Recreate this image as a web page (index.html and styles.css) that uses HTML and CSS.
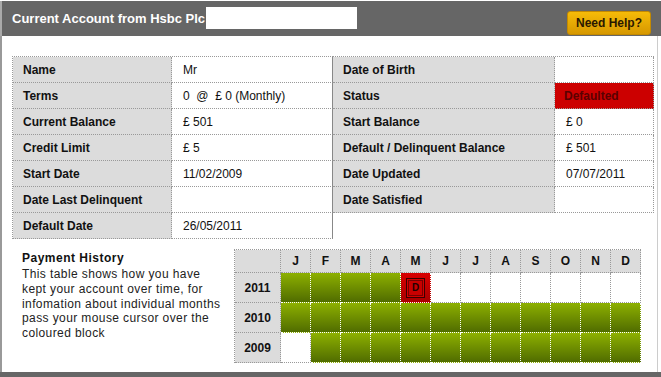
FILE: index.html
```html
<!DOCTYPE html>
<html>
<head>
<meta charset="utf-8">
<link rel="stylesheet" href="styles.css">
</head>
<body>
<div class="page">
  <div class="header">
    <h1 class="title">Current Account from Hsbc Plc<span class="redact"></span></h1>
    <a class="help">Need Help?</a>
  </div>
  <div class="content">
    <div class="details">
      <table class="tbl tbl-left">
        <colgroup><col class="c-l1"><col class="c-v1"></colgroup>
        <tr><td class="lab">Name</td><td class="val">Mr</td></tr>
        <tr><td class="lab">Terms</td><td class="val">0&nbsp; @&nbsp; £ 0 (Monthly)</td></tr>
        <tr><td class="lab">Current Balance</td><td class="val">£ 501</td></tr>
        <tr><td class="lab">Credit Limit</td><td class="val">£ 5</td></tr>
        <tr><td class="lab">Start Date</td><td class="val">11/02/2009</td></tr>
        <tr><td class="lab">Date Last Delinquent</td><td class="val"></td></tr>
        <tr><td class="lab">Default Date</td><td class="val">26/05/2011</td></tr>
      </table>
      <table class="tbl tbl-right">
        <colgroup><col class="c-l2"><col class="c-v2"></colgroup>
        <tr><td class="lab">Date of Birth</td><td class="val"></td></tr>
        <tr><td class="lab">Status</td><td class="val status">Defaulted</td></tr>
        <tr><td class="lab">Start Balance</td><td class="val">£ 0</td></tr>
        <tr><td class="lab">Default / Delinquent Balance</td><td class="val">£ 501</td></tr>
        <tr><td class="lab">Date Updated</td><td class="val">07/07/2011</td></tr>
        <tr><td class="lab">Date Satisfied</td><td class="val"></td></tr>
      </table>
    </div>
    <div class="history">
      <div class="intro">
        <h2 class="intro-title">Payment History</h2>
        <p class="intro-text">This table shows how you have kept your account over time, for infomation about individual months pass your mouse cursor over the coloured block</p>
      </div>
      <table class="grid">
        <tr class="grid-head"><td class="yr"></td><td>J</td><td>F</td><td>M</td><td>A</td><td>M</td><td>J</td><td>J</td><td>A</td><td>S</td><td>O</td><td>N</td><td>D</td></tr>
        <tr><td class="yr">2011</td><td class="g"></td><td class="g"></td><td class="g"></td><td class="g"></td><td class="d"><span class="dbox">D</span></td><td class="e"></td><td class="e"></td><td class="e"></td><td class="e"></td><td class="e"></td><td class="e"></td><td class="e"></td></tr>
        <tr><td class="yr">2010</td><td class="g"></td><td class="g"></td><td class="g"></td><td class="g"></td><td class="g"></td><td class="g"></td><td class="g"></td><td class="g"></td><td class="g"></td><td class="g"></td><td class="g"></td><td class="g"></td></tr>
        <tr><td class="yr">2009</td><td class="e"></td><td class="g"></td><td class="g"></td><td class="g"></td><td class="g"></td><td class="g"></td><td class="g"></td><td class="g"></td><td class="g"></td><td class="g"></td><td class="g"></td><td class="g"></td></tr>
      </table>
    </div>
  </div>
  <div class="footer"></div>
</div>
</body>
</html>
```
FILE: styles.css
```css
* { box-sizing: border-box; }
html, body { margin: 0; padding: 0; background: #fff; }
body { font-family: "Liberation Sans", Arial, sans-serif; font-size: 12px; color: #111; }

.page { width: 661px; height: 377px; display: flex; flex-direction: column; overflow: hidden; }

.header {
  height: 35px; margin-top: 1px; background: #666;
  border-left: 2px solid #aaa;
  display: flex; justify-content: space-between; align-items: flex-start;
  padding-left: 10px; padding-right: 10px;
}
.title {
  margin: 6px 0 0 0; height: 22px; display: flex; align-items: center;
  font-size: 13px; font-weight: bold; color: #fff;
}
.redact { display: inline-block; width: 151px; height: 22px; background: #fff; margin-left: 1px; }
.help {
  margin-top: 10px; width: 84px; height: 24px;
  display: flex; align-items: center; justify-content: center;
  background: linear-gradient(#f6bb08, #d69800);
  border: 1px solid #c48a00; border-radius: 3px;
  color: #2a1800; font-weight: bold; font-size: 12px;
}

.content {
  flex: 1; border-left: 2px solid #999; border-right: 1px solid #ccc;
  margin-right: 3px; padding: 20px 0 0 10px;
}

.details { display: flex; align-items: flex-start; }
.tbl { border-collapse: separate; border-spacing: 0; table-layout: fixed; border-top: 1px dotted #999; }
.tbl-left { width: 320px; border-left: 1px dotted #999; }
.tbl-right { width: 321px; }
.c-l1 { width: 159px; } .c-v1 { width: 161px; }
.c-l2 { width: 222px; } .c-v2 { width: 99px; }
.tbl td { height: 26px; padding: 0 0 0 10px; border-right: 1px dotted #999; border-bottom: 1px dotted #999; white-space: nowrap; vertical-align: middle; }
.tbl .lab { background: #dcdcdc; font-weight: bold; }
.tbl .val { background: #fff; padding-left: 11px; }
.tbl-left .val { border-right: 1px solid #888; }
.status { background: #cc0000 !important; color: #5a0000; font-weight: bold; padding-left: 9px !important; }

.history { display: flex; align-items: flex-start; margin-top: 10px; }
.intro { width: 222px; padding: 0 12px 0 10px; }
.intro-title { margin: 1px 0 0 0; font-size: 12px; font-weight: bold; letter-spacing: 0.5px; line-height: 16px; }
.intro-text { margin: 1px 0 0 0; font-size: 12px; line-height: 14.8px; letter-spacing: 0.4px; color: #222; }

.grid { border-collapse: separate; border-spacing: 0; table-layout: fixed; width: 406px; border-top: 1px dotted #999; border-left: 1px dotted #999; }
.grid td { width: 30px; height: 30px; padding: 0; text-align: center; border-right: 1px dotted #999; border-bottom: 1px dotted #999; font-weight: bold; }
.grid td.yr { width: 46px; background: #dcdcdc; }
.grid-head td { height: 23px; background: #dcdcdc; }
.grid td.g { background: linear-gradient(#8db000, #506c00); border-right-color: #fff; border-bottom-color: #fff; }
.grid td.e { background: #fff; }
.grid td.d { background: linear-gradient(#d80000, #a80000); border-right-color: #fff; border-bottom-color: #fff; }
.dbox {
  display: flex; align-items: center; justify-content: center; margin: 0 auto;
  width: 19px; height: 20px; border: 1px solid #3a0000;
  box-shadow: inset 0 0 0 1px #d40000, inset 0 0 0 2px #700;
  background: #c80000;
  color: #200; font-size: 10px; font-weight: bold;
}

.footer { height: 5px; background: #666; }
```
